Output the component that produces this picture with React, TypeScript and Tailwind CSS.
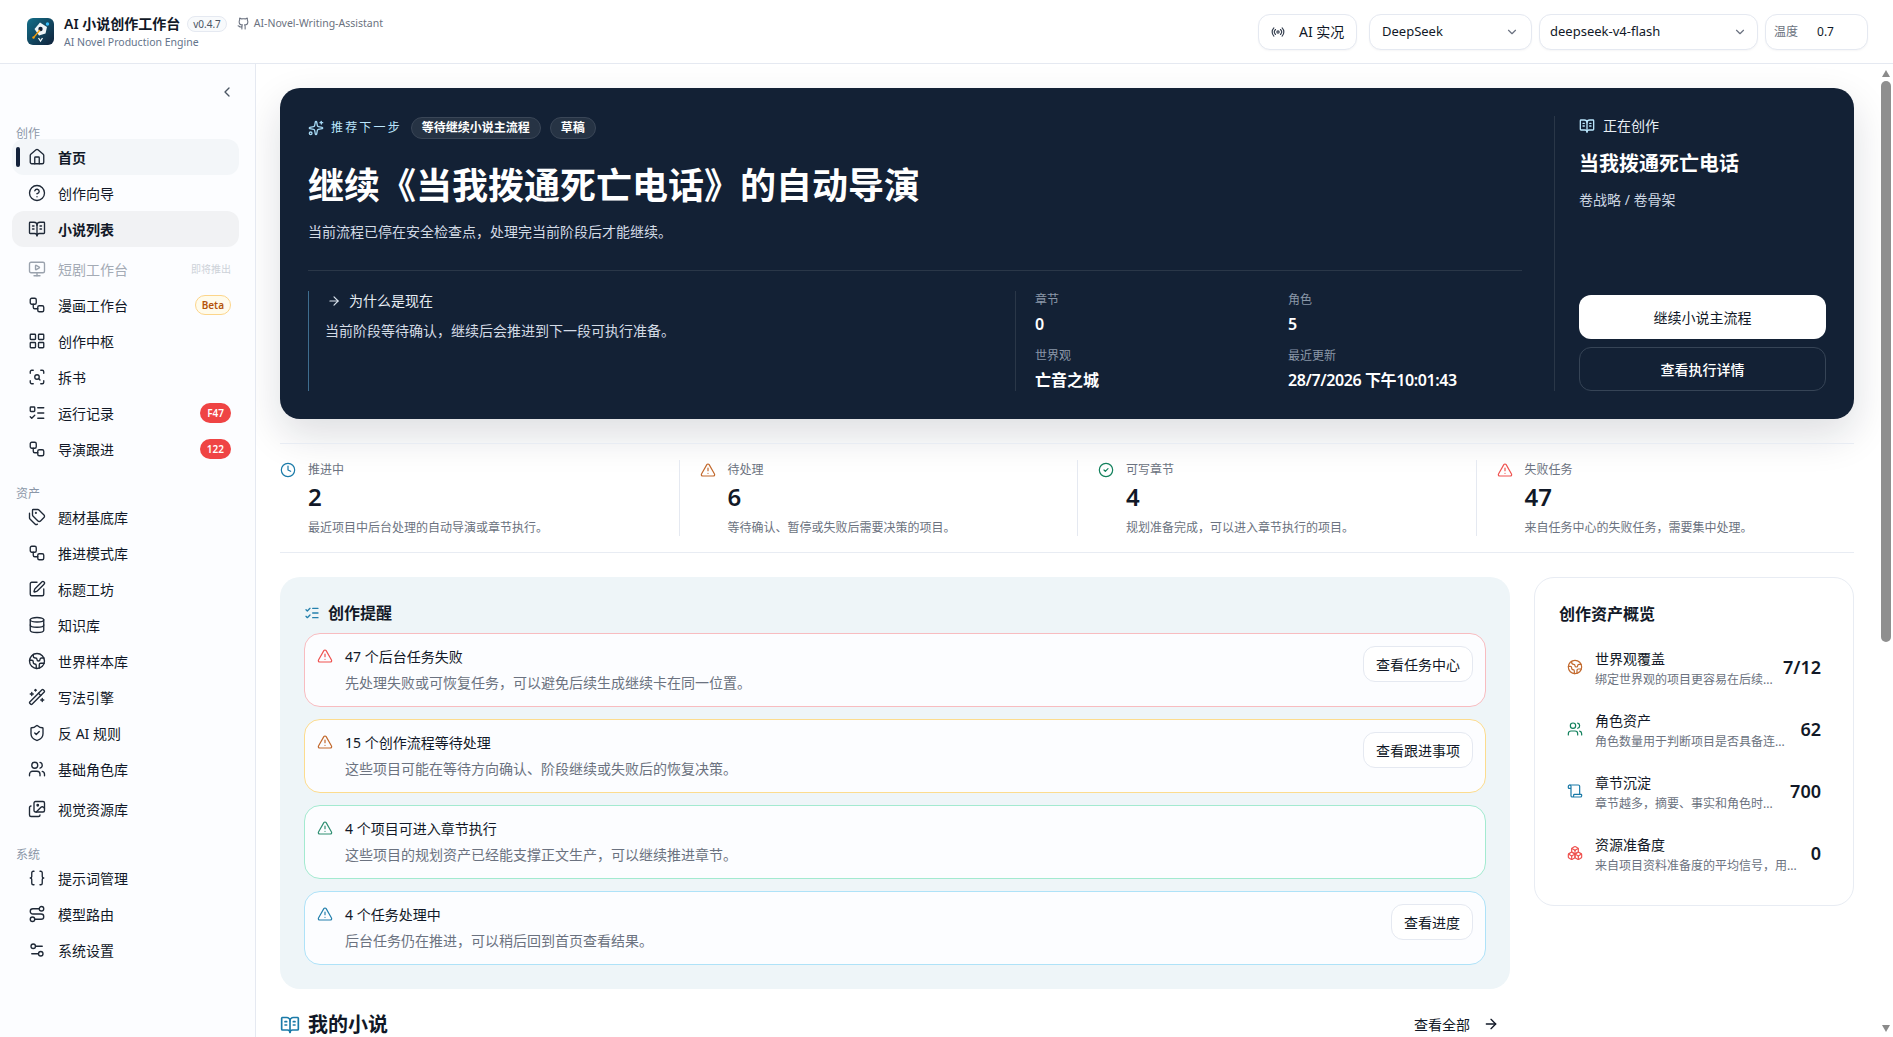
import {
  ArrowRight,
  BookOpenText,
  Boxes,
  Braces,
  ChevronDown,
  ChevronLeft,
  CircleCheck,
  CircleHelp,
  Clock,
  Database,
  Earth,
  Github,
  House,
  Images,
  LayoutGrid,
  ListChecks,
  ListTodo,
  MonitorPlay,
  Radio,
  Route,
  ScanSearch,
  Scroll,
  Settings2,
  ShieldCheck,
  Sparkles,
  SquarePen,
  Tags,
  TriangleAlert,
  Users,
  WandSparkles,
  Workflow,
  type LucideIcon,
} from 'lucide-react'

const FONT = "font-['Noto_Sans','Noto_Sans_CJK_SC',sans-serif]"

interface NavEntry {
  label: string
  icon: LucideIcon
  active?: boolean
  selected?: boolean
  muted?: boolean
  tail?: 'soon' | 'beta' | string
  rowClass?: string
}

const createNav: NavEntry[] = [
  { label: '首页', icon: House, active: true },
  { label: '创作向导', icon: CircleHelp },
  { label: '小说列表', icon: BookOpenText, selected: true },
  { label: '短剧工作台', icon: MonitorPlay, muted: true, tail: 'soon', rowClass: 'mt-[4px]' },
  { label: '漫画工作台', icon: Workflow, tail: 'beta' },
  { label: '创作中枢', icon: LayoutGrid },
  { label: '拆书', icon: ScanSearch },
  { label: '运行记录', icon: ListTodo, tail: 'F47' },
  { label: '导演跟进', icon: Workflow, tail: '122' },
]

const assetNav: NavEntry[] = [
  { label: '题材基底库', icon: Tags },
  { label: '推进模式库', icon: Workflow },
  { label: '标题工坊', icon: SquarePen },
  { label: '知识库', icon: Database },
  { label: '世界样本库', icon: Earth },
  { label: '写法引擎', icon: WandSparkles },
  { label: '反 AI 规则', icon: ShieldCheck },
  { label: '基础角色库', icon: Users },
  { label: '视觉资源库', icon: Images, rowClass: 'mt-[4px]' },
]

const systemNav: NavEntry[] = [
  { label: '提示词管理', icon: Braces },
  { label: '模型路由', icon: Route },
  { label: '系统设置', icon: Settings2 },
]

function NavRow({ entry }: { entry: NavEntry }) {
  const Icon = entry.icon
  return (
    <div
      className={`relative flex h-9 items-center rounded-xl pl-[16px] pr-2 ${entry.rowClass ?? ''} ${
        entry.active ? 'bg-[#f3f6f9]' : entry.selected ? 'bg-[#f1f2f4]' : ''
      }`}
    >
      {entry.active && <span className="absolute left-1 top-1/2 h-5 w-1 -translate-y-1/2 rounded-full bg-[#13213a]" />}
      <Icon size={18} strokeWidth={1.8} className={entry.muted ? 'text-[#9aa2ad]' : 'text-[#1f2937]'} />
      <span
        className={`ml-[12px] text-[14px] ${
          entry.muted ? 'text-[#a4abb5]' : 'text-[#111827]'
        } ${entry.active || entry.selected ? 'font-semibold' : ''}`}
      >
        {entry.label}
      </span>
      {entry.tail === 'soon' && <span className="ml-auto text-[10px] text-[#cdd2d9]">即将推出</span>}
      {entry.tail === 'beta' && (
        <span className="ml-auto rounded-full border border-[#fcd58a] bg-[#fffbeb] px-[6px] py-[1px] text-[10px] font-semibold leading-[16px] text-[#b45309]">
          Beta
        </span>
      )}
      {entry.tail !== 'soon' && entry.tail !== 'beta' && entry.tail && (
        <span className="ml-auto rounded-full bg-[#ef4444] px-[7px] text-[10px] font-semibold leading-5 text-white">
          {entry.tail}
        </span>
      )}
    </div>
  )
}

function Sidebar() {
  return (
    <aside className="flex w-[256px] shrink-0 flex-col border-r border-[#e5e9f1] bg-[#fcfdff] pl-3 pr-4">
      <div className="flex h-[50px] items-center justify-end pr-[4px] pt-[6px]">
        <ChevronLeft size={16} className="text-[#4b5563]" />
      </div>
      <div className="mt-[15px] text-[12px] leading-[10px] text-[#8b97a8]">
        <span className="pl-[4px]">创作</span>
      </div>
      <div className="flex flex-col">
        {createNav.map(e => (
          <NavRow key={e.label} entry={e} />
        ))}
      </div>
      <div className="mt-[22px] text-[12px] leading-[10px] text-[#8b97a8]">
        <span className="pl-[4px]">资产</span>
      </div>
      <div className="flex flex-col">
        {assetNav.map(e => (
          <NavRow key={e.label} entry={e} />
        ))}
      </div>
      <div className="mt-[23px] text-[12px] leading-[10px] text-[#8b97a8]">
        <span className="pl-[4px]">系统</span>
      </div>
      <div className="flex flex-col">
        {systemNav.map(e => (
          <NavRow key={e.label} entry={e} />
        ))}
      </div>
    </aside>
  )
}

function Logo() {
  return (
    <svg width="27" height="27" viewBox="0 0 27 27" className="shrink-0">
      <defs>
        <linearGradient id="logo-bg" x1="0" y1="0" x2="1" y2="1">
          <stop offset="0" stopColor="#14708a" />
          <stop offset="1" stopColor="#10213a" />
        </linearGradient>
      </defs>
      <rect width="27" height="27" rx="6" fill="url(#logo-bg)" />
      <path d="M13 4.5 L20 9 L18.5 15.5 L12 17.5 L7.5 11 Z" fill="#eef5f8" />
      <circle cx="13.5" cy="11" r="2.2" fill="#10213a" />
      <path d="M7 19 L13 12" stroke="#f59e0b" strokeWidth="1.2" />
      <circle cx="20.5" cy="6" r="1.7" fill="#38bdf8" />
      <circle cx="6.5" cy="19.5" r="1.2" fill="#f59e0b" />
      <path d="M11.5 20 L13.5 23 L15.5 20" stroke="#eef5f8" strokeWidth="1.3" fill="none" />
    </svg>
  )
}

function Header() {
  return (
    <header className="flex h-[64px] shrink-0 items-center border-b border-[#e5e9f1] bg-white pl-[27px] pr-[25px]">
      <Logo />
      <div className="ml-[10px] flex flex-col">
        <div className="flex items-center">
          <span className="text-[14px] font-semibold leading-[20px] text-[#111827]">AI 小说创作工作台</span>
          <span className="ml-[7px] rounded-full border border-[#e5e9f1] bg-[#f8fafc] px-[5px] text-[10px] leading-[14px] text-[#4b5563]">
            v0.4.7
          </span>
          <Github size={13} className="ml-[10px] text-[#6b7280]" />
          <span className="ml-[4px] text-[10.5px] text-[#6b7280]">AI-Novel-Writing-Assistant</span>
        </div>
        <span className="text-[10.5px] leading-[16px] text-[#64748b]">AI Novel Production Engine</span>
      </div>
      <div className="ml-auto flex items-center">
        <div className="flex h-[36px] w-[99px] items-center rounded-xl border border-[#e5e9f1] bg-white pl-[12px] shadow-[0_1px_2px_rgba(15,23,42,0.04)]">
          <Radio size={14} className="text-[#374151]" />
          <span className="ml-[14px] text-[14px] text-[#111827]">AI 实况</span>
        </div>
        <div className="ml-[12px] flex h-[36px] w-[163px] items-center justify-between rounded-xl border border-[#e5e9f1] bg-white pl-[12px] pr-[12px] shadow-[0_1px_2px_rgba(15,23,42,0.04)]">
          <span className="text-[13px] text-[#111827]">DeepSeek</span>
          <ChevronDown size={14} className="text-[#6b7280]" />
        </div>
        <div className="ml-[7px] flex h-[36px] w-[219px] items-center justify-between rounded-xl border border-[#e5e9f1] bg-white pl-[10px] pr-[10px] shadow-[0_1px_2px_rgba(15,23,42,0.04)]">
          <span className="text-[13px] text-[#111827]">deepseek-v4-flash</span>
          <ChevronDown size={14} className="text-[#6b7280]" />
        </div>
        <div className="ml-[7px] flex h-[36px] w-[103px] items-center rounded-xl border border-[#e5e9f1] bg-white pl-[8px] shadow-[0_1px_2px_rgba(15,23,42,0.04)]">
          <span className="text-[12px] text-[#6b7280]">温度</span>
          <span className="ml-[19px] text-[12px] text-[#111827]">0.7</span>
        </div>
      </div>
    </header>
  )
}

function HeroFact({ label, value, tight }: { label: string; value: string; tight?: boolean }) {
  return (
    <div className="flex flex-col">
      <span className="text-[12px] leading-[16px] text-[#8a97a8]">{label}</span>
      <span className={`mt-[5px] text-[16px] font-semibold leading-[22px] text-white ${tight ? 'tracking-[-0.4px]' : ''}`}>
        {value}
      </span>
    </div>
  )
}

function Hero() {
  return (
    <section className="flex h-[331px] rounded-[20px] bg-[#132135] pl-[28px] pr-[28px] pt-[28px] shadow-[0_16px_40px_rgba(15,23,42,0.14)]">
      <div className="flex min-w-0 flex-1 flex-col pt-[1px]">
        <div className="flex items-center">
          <Sparkles size={16} className="text-[#a5d8f3]" />
          <span className="ml-[7px] text-[12px] tracking-[0.18em] text-[#bae6fd]">推荐下一步</span>
          <span className="ml-[9px] rounded-full border border-[#3a4657] bg-[#263344] px-[10px] text-[12px] font-semibold leading-[20px] text-white">
            等待继续小说主流程
          </span>
          <span className="ml-[9px] rounded-full border border-[#3a4657] bg-[#263344] px-[10px] text-[12px] font-semibold leading-[20px] text-white">
            草稿
          </span>
        </div>
        <h1 className="mt-[22px] text-[36px] font-bold leading-[50px] text-white">继续《当我拨通死亡电话》的自动导演</h1>
        <p className="mt-[11px] text-[14px] leading-[20px] text-[#d3dbe5]">
          当前流程已停在安全检查点，处理完当前阶段后才能继续。
        </p>
        <div className="mt-[28px] border-t border-[#2a3748]" />
        <div className="mt-[20px] flex h-[100px]">
          <div className="flex w-[707px] flex-col border-l border-[#3e6d8f] pl-[16px]">
            <div className="flex items-center pl-[2px]">
              <ArrowRight size={14} className="text-[#dbe4ee]" />
              <span className="ml-[8px] text-[14px] leading-[20px] text-[#e8eef4]">为什么是现在</span>
            </div>
            <p className="mt-[10px] text-[14px] leading-[20px] text-[#d3dbe5]">
              当前阶段等待确认，继续后会推进到下一段可执行准备。
            </p>
          </div>
          <div className="grid flex-1 grid-cols-[253px_1fr] grid-rows-[56px_1fr] border-l border-[#2a3748] pl-[19px] pt-[1px]">
            <HeroFact label="章节" value="0" />
            <HeroFact label="角色" value="5" />
            <HeroFact label="世界观" value="亡音之城" />
            <HeroFact label="最近更新" value="28/7/2026 下午10:01:43" tight />
          </div>
        </div>
      </div>
      <div className="ml-[32px] mb-[28px] flex w-[272px] shrink-0 flex-col border-l border-[#2a3748] pl-[24px]">
        <div className="flex items-center">
          <BookOpenText size={16} className="text-[#bae6fd]" />
          <span className="ml-[8px] text-[14px] leading-[20px] text-[#e8eef4]">正在创作</span>
        </div>
        <div className="mt-[12px] text-[20px] font-bold leading-[32px] text-white">当我拨通死亡电话</div>
        <div className="mt-[10px] text-[14px] leading-[20px] text-[#cbd5e1]">卷战略 / 卷骨架</div>
        <button className="mt-auto h-[44px] rounded-xl bg-white text-[14px] text-[#111827]">继续小说主流程</button>
        <button className="mt-[8px] h-[44px] rounded-xl border border-[#364456] text-[14px] font-medium text-white">查看执行详情</button>
      </div>
    </section>
  )
}

const stats = [
  { label: '推进中', value: '2', note: '最近项目中后台处理的自动导演或章节执行。', icon: Clock, color: 'text-[#1a7aa8]' },
  { label: '待处理', value: '6', note: '等待确认、暂停或失败后需要决策的项目。', icon: TriangleAlert, color: 'text-[#c2692d]' },
  { label: '可写章节', value: '4', note: '规划准备完成，可以进入章节执行的项目。', icon: CircleCheck, color: 'text-[#12805c]' },
  { label: '失败任务', value: '47', note: '来自任务中心的失败任务，需要集中处理。', icon: TriangleAlert, color: 'text-[#ef5350]' },
]

function StatStrip() {
  return (
    <section className="mt-[24px] grid h-[110px] grid-cols-4 gap-x-5 border-y border-[#e8ecf3] py-4">
      {stats.map((s, i) => {
        const Icon = s.icon
        return (
          <div key={s.label} className={`flex min-w-0 ${i > 0 ? 'border-l border-[#e5e9f1] pl-5' : ''}`}>
            <Icon size={16} strokeWidth={1.8} className={`mt-[2px] shrink-0 ${s.color}`} />
            <div className="ml-[12px] flex flex-col pt-[2px]">
              <span className="text-[12px] leading-[16px] text-[#6b7280]">{s.label}</span>
              <span className="mt-[3px] text-[24px] font-semibold leading-[32px] text-[#111827]">{s.value}</span>
              <span className="mt-[7px] text-[12px] leading-[16px] text-[#6b7280]">{s.note}</span>
            </div>
          </div>
        )
      })}
    </section>
  )
}

const reminders = [
  { title: '47 个后台任务失败', note: '先处理失败或可恢复任务，可以避免后续生成继续卡在同一位置。', action: '查看任务中心', border: 'border-[#f8bcc0]', color: 'text-[#ef5350]' },
  { title: '15 个创作流程等待处理', note: '这些项目可能在等待方向确认、阶段继续或失败后的恢复决策。', action: '查看跟进事项', border: 'border-[#fcdc8e]', color: 'text-[#c2692d]' },
  { title: '4 个项目可进入章节执行', note: '这些项目的规划资产已经能支撑正文生产，可以继续推进章节。', action: '', border: 'border-[#a3ead0]', color: 'text-[#2f8f72]' },
  { title: '4 个任务处理中', note: '后台任务仍在推进，可以稍后回到首页查看结果。', action: '查看进度', border: 'border-[#aee2f8]', color: 'text-[#2480ad]' },
]

function Reminders() {
  return (
    <section className="w-[1230px] shrink-0 rounded-[20px] bg-[#eef5f8] p-6">
      <div className="flex items-center">
        <ListChecks size={16} className="text-[#2480ad]" />
        <h2 className="ml-[8px] text-[16px] font-semibold leading-[24px] text-[#111827]">创作提醒</h2>
      </div>
      <div className="mt-[8px] flex flex-col gap-[12px]">
        {reminders.map(r => (
          <div key={r.title} className={`flex h-[74px] items-start rounded-2xl border ${r.border} bg-[#fcfdff] px-[12px] pt-[12px]`}>
            <TriangleAlert size={16} strokeWidth={1.8} className={`mt-[2px] shrink-0 ${r.color}`} />
            <div className="ml-[12px] flex flex-col pt-[1px]">
              <span className="text-[14px] leading-[20px] text-[#111827]">{r.title}</span>
              <span className="mt-[6px] text-[14px] leading-[20px] text-[#6b7280]">{r.note}</span>
            </div>
            {r.action && (
              <button className="ml-auto h-[36px] rounded-xl border border-[#e5e9f1] bg-white px-[12px] text-[14px] text-[#111827]">
                {r.action}
              </button>
            )}
          </div>
        ))}
      </div>
    </section>
  )
}

const assets = [
  { title: '世界观覆盖', note: '绑定世界观的项目更容易在后续...', value: '7/12', icon: Earth, color: 'text-[#c2692d]' },
  { title: '角色资产', note: '角色数量用于判断项目是否具备连...', value: '62', icon: Users, color: 'text-[#12805c]' },
  { title: '章节沉淀', note: '章节越多，摘要、事实和角色时...', value: '700', icon: Scroll, color: 'text-[#1a7aa8]' },
  { title: '资源准备度', note: '来自项目资料准备度的平均信号，用...', value: '0', icon: Boxes, color: 'text-[#ef5350]' },
]

function AssetCard() {
  return (
    <section className="ml-[24px] h-[329px] w-[320px] shrink-0 rounded-[20px] border border-[#e8ecf3] bg-white px-6 pt-[24px]">
      <h2 className="text-[16px] font-semibold leading-[24px] text-[#111827]">创作资产概览</h2>
      <div className="mt-[20px] flex flex-col gap-[20px]">
        {assets.map(a => {
          const Icon = a.icon
          return (
            <div key={a.title} className="flex h-[42px] items-center px-[8px]">
              <Icon size={16} strokeWidth={1.8} className={`shrink-0 ${a.color}`} />
              <div className="ml-[12px] flex min-w-0 flex-1 flex-col pt-[2px]">
                <span className="text-[14px] leading-[20px] text-[#111827]">{a.title}</span>
                <span className="mt-[3px] truncate text-[12px] leading-[16px] text-[#6b7280]">{a.note}</span>
              </div>
              <span className="ml-[8px] shrink-0 text-[18px] font-semibold text-[#111827]">{a.value}</span>
            </div>
          )
        })}
      </div>
    </section>
  )
}

// scrollbar of the main pane, drawn over the content
function FakeScrollbar() {
  return (
    <div className="absolute bottom-0 right-0 top-0 w-[13px]">
      <span className="absolute left-[2px] top-[6px] h-0 w-0 border-x-[4px] border-b-[7px] border-x-transparent border-b-[#8a8a8a]" />
      <span className="absolute left-[1px] top-[17px] h-[561px] w-[10px] rounded-full bg-[#8f8f8f]" />
      <span className="absolute bottom-[5px] left-[2px] h-0 w-0 border-x-[4px] border-t-[7px] border-x-transparent border-t-[#8a8a8a]" />
    </div>
  )
}

export default function App() {
  return (
    <div className={`flex h-screen flex-col overflow-hidden bg-white ${FONT}`}>
      <Header />
      <div className="flex min-h-0 flex-1">
        <Sidebar />
        <main className="relative min-w-0 flex-1 overflow-hidden bg-white pl-[24px] pr-[39px] pt-[24px]">
          <Hero />
          <StatStrip />
          <div className="mt-[24px] flex items-start">
            <Reminders />
            <AssetCard />
          </div>
          <div className="mt-[22px] flex w-[1230px] items-center">
            <BookOpenText size={20} className="text-[#1a7aa8]" />
            <h2 className="ml-[8px] text-[20px] font-bold leading-[28px] text-[#111827]">我的小说</h2>
            <span className="ml-auto mb-[2px] text-[14px] text-[#111827]">查看全部</span>
            <ArrowRight size={16} className="ml-[13px] mr-[11px] mb-[2px] text-[#111827]" />
          </div>
          <FakeScrollbar />
        </main>
      </div>
    </div>
  )
}
